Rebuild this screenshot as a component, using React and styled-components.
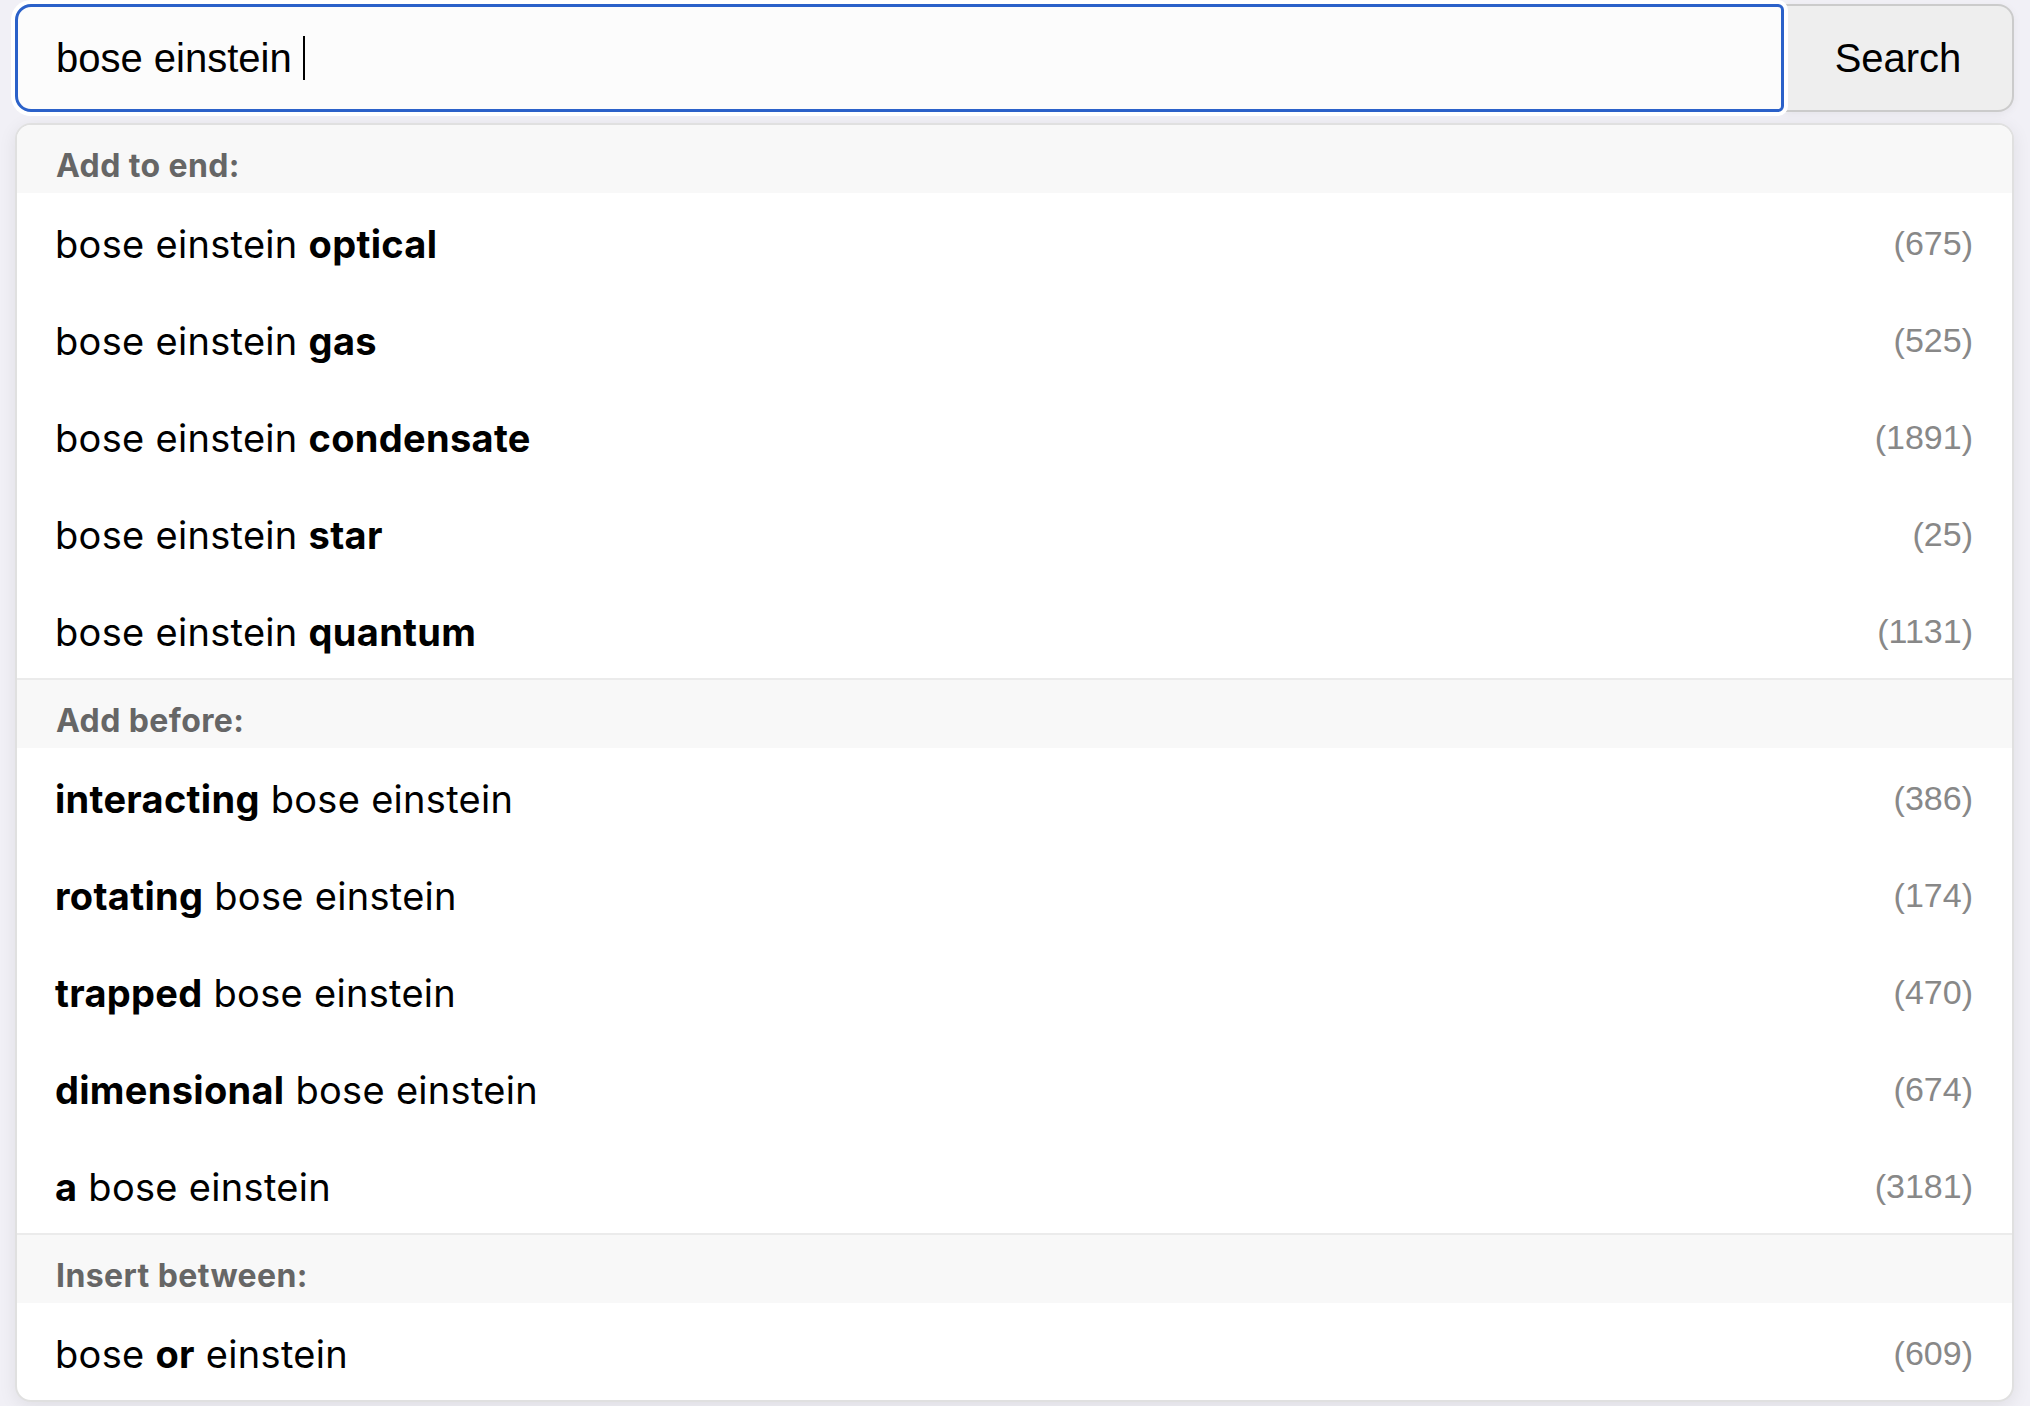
import React from "react";
import styled, { createGlobalStyle } from "styled-components";

const GlobalStyle = createGlobalStyle`
  html, body {
    margin: 0;
    background: #f1f0f6;
  }
  body {
    font-family: Inter, "Noto Sans", sans-serif;
  }
`;

const Page = styled.div`
  padding: 4px 16px 4px 15px;
`;

const SearchBar = styled.form`
  display: flex;
  height: 108px;
  margin: 0;
`;

const Field = styled.div`
  flex: 1;
  display: flex;
  align-items: center;
  padding: 0 38px;
  background: #fcfcfc;
  border: 3px solid #2b61c9;
  border-radius: 16px 6px 6px 16px;
  box-shadow: 0 0 0 4px #fff;
  position: relative;
  z-index: 1;
  font-family: "Liberation Sans", Arial, sans-serif;
  font-size: 40px;
  color: #000;
  white-space: pre;
`;

const Caret = styled.span`
  display: inline-block;
  width: 2px;
  height: 44px;
  background: #000;
`;

const SearchButton = styled.button`
  width: 230px;
  border: 2px solid #cbcbcb;
  border-left: none;
  border-radius: 0 16px 16px 0;
  background: #eeeeee;
  font-family: "Liberation Sans", Arial, sans-serif;
  font-size: 40px;
  color: #000;
  cursor: pointer;
  box-shadow: 0 2px 8px rgba(0, 0, 0, 0.05);
`;

const Dropdown = styled.div`
  margin-top: 11px;
  background: #fff;
  border: 2px solid #e0e0e0;
  border-radius: 16px;
  overflow: hidden;
  box-shadow: 0 4px 18px rgba(0, 0, 0, 0.08);
`;

const Section = styled.div`
  & + & {
    border-top: 2px solid #ebebeb;
  }
`;

const SectionTitle = styled.div`
  height: 68px;
  box-sizing: border-box;
  padding: 23px 39px 0;
  background: #f8f8f8;
  font-size: 32px;
  line-height: 36px;
  letter-spacing: 0.4px;
  font-weight: 700;
  color: #666;
`;

const Row = styled.div`
  height: 97px;
  box-sizing: border-box;
  display: flex;
  align-items: center;
  justify-content: space-between;
  padding: 4px 39px 0 38px;
  font-size: 38px;
  letter-spacing: 0.3px;
  color: #000;
  cursor: pointer;
`;

const Phrase = styled.span`
  white-space: pre;
`;

const Count = styled.span`
  font-family: "Liberation Sans", Arial, sans-serif;
  font-size: 34px;
  letter-spacing: 0;
  color: #888;
`;

const sections = [
  {
    title: "Add to end:",
    items: [
      ["bose einstein ", "optical", "", 675],
      ["bose einstein ", "gas", "", 525],
      ["bose einstein ", "condensate", "", 1891],
      ["bose einstein ", "star", "", 25],
      ["bose einstein ", "quantum", "", 1131],
    ],
  },
  {
    title: "Add before:",
    items: [
      ["", "interacting", " bose einstein", 386],
      ["", "rotating", " bose einstein", 174],
      ["", "trapped", " bose einstein", 470],
      ["", "dimensional", " bose einstein", 674],
      ["", "a", " bose einstein", 3181],
    ],
  },
  {
    title: "Insert between:",
    items: [["bose ", "or", " einstein", 609]],
  },
];

const App = () => {
  return (
    <Page>
      <GlobalStyle />
      <SearchBar onSubmit={(e) => e.preventDefault()}>
        <Field role="textbox">
          bose einstein <Caret />
        </Field>
        <SearchButton type="submit">Search</SearchButton>
      </SearchBar>
      <Dropdown>
        {sections.map((section) => (
          <Section key={section.title}>
            <SectionTitle>{section.title}</SectionTitle>
            {section.items.map(([before, bold, after, count]) => (
              <Row key={before + bold + after}>
                <Phrase>
                  {before}
                  <b>{bold}</b>
                  {after}
                </Phrase>
                <Count>({count})</Count>
              </Row>
            ))}
          </Section>
        ))}
      </Dropdown>
    </Page>
  );
};

export default App;
